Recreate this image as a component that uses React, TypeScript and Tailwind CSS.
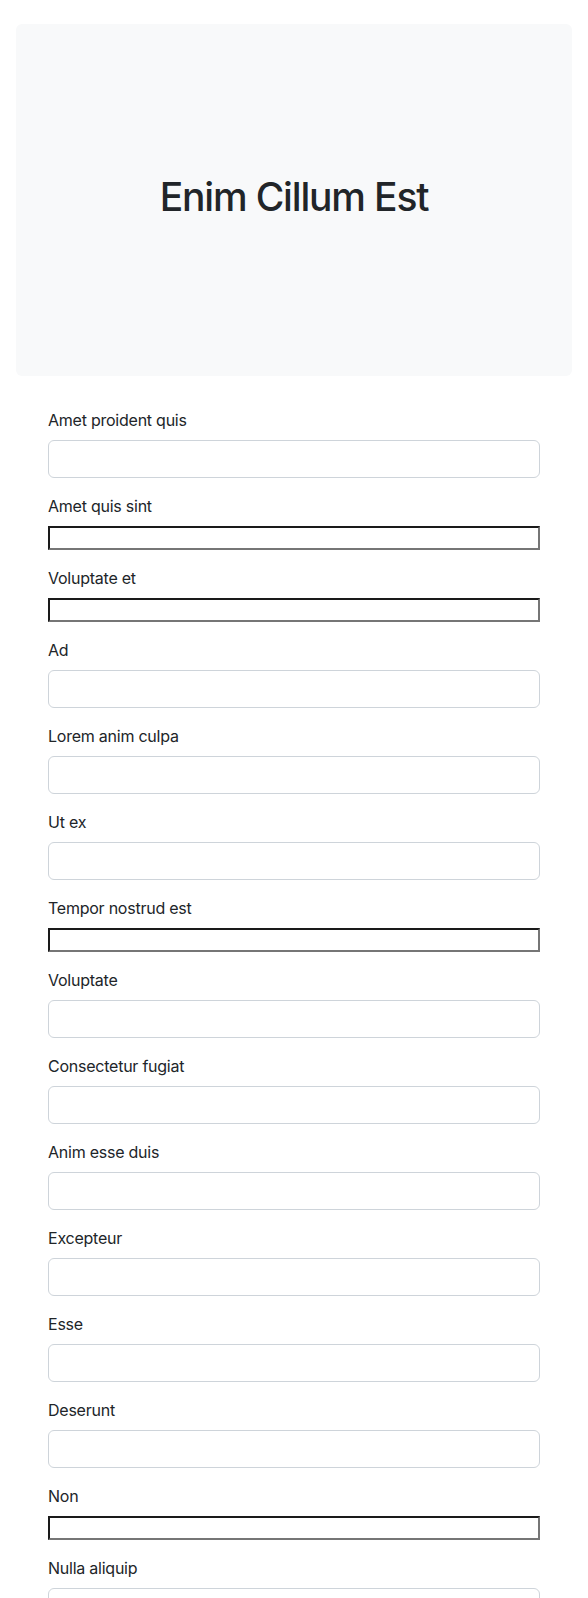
const FIELDS: { label: string; plain?: boolean }[] = [
  { label: "Amet proident quis" },
  { label: "Amet quis sint", plain: true },
  { label: "Voluptate et", plain: true },
  { label: "Ad" },
  { label: "Lorem anim culpa" },
  { label: "Ut ex" },
  { label: "Tempor nostrud est", plain: true },
  { label: "Voluptate" },
  { label: "Consectetur fugiat" },
  { label: "Anim esse duis" },
  { label: "Excepteur" },
  { label: "Esse" },
  { label: "Deserunt" },
  { label: "Non", plain: true },
  { label: "Nulla aliquip" },
];

export default function App() {
  return (
    <div className="min-h-screen bg-white font-['Inter',sans-serif] text-[#212529]">
      {/* Hero */}
      <div className="mx-4 mt-6 flex h-[352px] items-center justify-center rounded-md bg-[#f8f9fa]">
        <h1 className="mb-[6px] text-[39px] font-medium leading-tight tracking-[-0.03em]">Enim Cillum Est</h1>
      </div>

      {/* Form */}
      <form className="px-12 pt-8">
        {FIELDS.map((f, i) => (
          <div key={i} className="mb-4">
            <label className="mb-2 block text-base leading-6 tracking-[-0.015em]">{f.label}</label>
            {f.plain ? (
              <input
                type="text"
                className="block h-[24px] w-full border-2 border-t-[#1a1a1a] border-l-[#1a1a1a] border-r-[#767676] border-b-[#767676] bg-white"
              />
            ) : (
              <input
                type="text"
                className="block h-[38px] w-full rounded-md border border-[#ced4da] bg-white px-3 text-base"
              />
            )}
          </div>
        ))}
      </form>
    </div>
  );
}
